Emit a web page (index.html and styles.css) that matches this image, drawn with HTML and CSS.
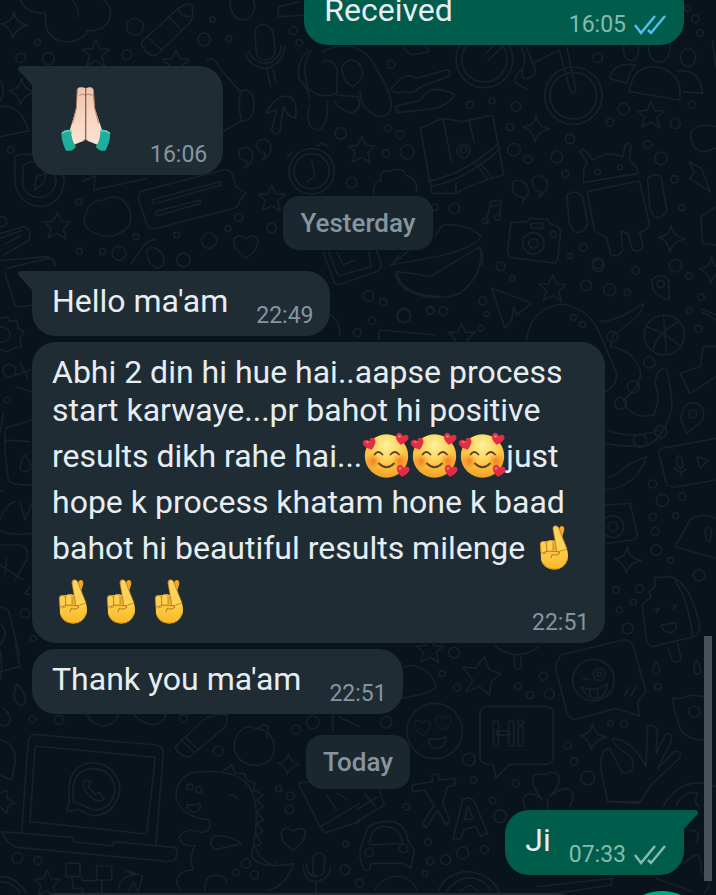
FILE: index.html
```html
<!DOCTYPE html>
<html lang="en">
<head>
<meta charset="utf-8">
<meta name="viewport" content="width=device-width, initial-scale=1">
<title>Chat</title>
<link rel="stylesheet" href="styles.css">
</head>
<body>
<svg class="wallpaper" viewBox="0 0 2148 2685" aria-hidden="true">
  <defs>
    <path id="star" d="M0-40 12-13 40-12 18 8 26 38 0 22-28 36-19 7-40-12-12-14Z"/>
    <path id="spark" d="M0-40Q4-5 42 2 5 8-4 40-8 8-38-4-4-6 0-40Z"/>
    <path id="heart" d="M0 36C-60 0-36-50 0-22 38-50 56 0 0 36Z"/>
    <path id="quote" d="M-6 30Q6 18 2 6C-28 10-28-32-4-32 30-32 28 18-6 30Z"/>
  </defs>
  <g>
    <path d="M60-5Q70 40 138 40M215-5Q245 40 232 52M138 40C130 90 150 130 215 125Q255 115 262 92C340 95 350 20 305-5"/>
    <path d="M425 125 535 25Q570 5 576 15 582 55 570 68L470 165Q445 172 425 135ZM440 108 485 150M505 50 545 90M535 25Q540 50 572 50"/>
    <path d="M765 95Q768 72 792 74 818 80 820 105L826 150Q822 180 795 180 770 178 768 150ZM737 158Q750 205 800 205 850 190 856 136M745 150Q760 190 800 190 840 180 845 136M800 205 812 260M820 205 828 250"/>
    <path d="M620 180Q640 165 660 205L720 275Q755 255 762 310 762 365 725 362L660 400M722 275Q712 320 725 362"/>
    <path d="M798 340Q830 280 870 290 895 310 886 355L865 345 850 320 840 395Q822 410 815 390L830 330Z"/>
    <path d="M925 150Q885 190 898 240 925 260 930 300M935 150Q900 190 925 265Q960 300 1010 280L1012 210Q1000 170 965 185M965 155Q1070 110 1120 190L1155 250Q1200 350 1138 350 1080 330 1080 270M930 310Q910 385 955 390 990 370 980 300M1000 300Q1030 345 1065 335 1085 320 1075 290L1005 285M1025 205Q1040 170 1070 185 1110 220 1060 260Q1030 250 1025 205"/>
    <path d="M45 470C60 455 180 460 193 540 185 640 80 640 50 570 40 530 45 490 45 470M70 500C90 470 170 490 168 550 150 610 85 600 68 560ZM105 570 108 530 140 520 130 550ZM0 410 90 392M0 320Q60 310 85 388M0 240Q20 270 0 305"/>
    <path d="M245 545 285 528 282 570 440 535M310 600Q345 580 372 604 405 640 385 680 340 725 285 700 240 680 258 640 270 600 310 600Z"/>
    <path d="M420 575 670 510Q690 508 695 520L708 560 738 580 720 598Q720 620 700 625L470 685Q445 690 440 670L415 595ZM455 600 660 545 665 555 460 612ZM465 635 600 600 602 610 470 648Z"/>
    <circle cx="935" cy="514" r="68"/><circle cx="935" cy="514" r="53"/><path d="M950 440 960 430 985 438M860 475 875 455M935 480 945 530 920 545"/>
    <path d="M0 700 70 680Q100 690 85 722L10 765M0 715 70 690M10 735 65 705M0 782 140 770Q165 775 165 800"/>
    <path d="M390 795 430 740Q440 720 470 718M440 750Q460 730 485 760 505 800 470 805 440 790 440 750Z"/>
    <path d="M690 0Q690 60 735 60 775 40 760 0M835 20 900 5M835 50 920 45M835 20V50"/>
    <use href="#spark" x="42" y="75"/><use href="#star" x="288" y="160"/><use href="#star" x="528" y="190"/><use href="#star" x="815" y="595"/><use href="#star" x="172" y="678"/><use href="#spark" x="65" y="275"/><use href="#star" x="1085" y="450"/>
    <use href="#quote" x="738" y="475"/><use href="#quote" x="792" y="450"/><use href="#heart" x="738" y="738"/>
    <circle cx="405" cy="80" r="25"/><circle cx="612" cy="118" r="19"/><circle cx="637" cy="58" r="8"/><circle cx="686" cy="116" r="9"/><circle cx="380" cy="164" r="15"/><circle cx="145" cy="175" r="18"/><circle cx="62" cy="173" r="14"/><circle cx="113" cy="127" r="9"/><circle cx="880" cy="92" r="12"/><circle cx="898" cy="128" r="10"/><circle cx="1022" cy="400" r="17"/><circle cx="1055" cy="548" r="16"/><circle cx="627" cy="722" r="23"/><circle cx="357" cy="760" r="21"/><circle cx="550" cy="780" r="20"/><circle cx="237" cy="606" r="9"/><circle cx="32" cy="450" r="10"/><circle cx="716" cy="652" r="12"/><circle cx="684" cy="686" r="9"/><circle cx="815" cy="684" r="14"/><circle cx="408" cy="710" r="9"/><circle cx="238" cy="754" r="9"/><circle cx="530" cy="705" r="9"/><circle cx="308" cy="755" r="9"/><circle cx="5" cy="665" r="15"/>
  </g>
  <g transform="translate(1068 0)">
    <path d="M105 265 135 235Q160 220 180 235L270 210Q285 210 280 228L195 260Q170 285 145 275 110 285 105 265ZM118 320 195 300Q210 265 240 268 290 275 295 285 275 315 240 325L125 338ZM140 140 165 165 220 155 205 135"/>
    <circle cx="385" cy="178" r="85"/><circle cx="385" cy="178" r="68"/><circle cx="652" cy="287" r="86"/><circle cx="652" cy="287" r="70"/>
    <path d="M385 165 425 125M395 182 440 140M495 140Q515 180 500 205 470 230 480 250L515 270M510 140 530 190 610 150 642 270Q650 290 660 270L632 140M530 190Q550 220 520 235 490 240 500 205"/>
    <path d="M820 275Q830 195 900 200 980 215 972 300ZM760 235Q775 185 840 195 820 215 812 250ZM965 215Q1030 200 1040 280L980 275"/><ellipse cx="910" cy="145" rx="32" ry="42"/><ellipse cx="825" cy="150" rx="23" ry="32"/><ellipse cx="996" cy="172" rx="23" ry="28"/>
    <path d="M193 385 260 355 320 365 410 345 443 525Q360 545 300 580L228 580ZM215 545Q330 520 428 430M222 560Q330 540 435 445M370 485 410 535M360 490 395 540M260 355 288 490M340 360 355 430M300 545V580M302 450Q325 415 343 450 335 475 325 475 305 470 302 450Z"/><circle cx="322" cy="450" r="9"/>
    <path d="M55 585Q45 550 75 540 65 510 105 512 140 500 150 525 190 540 180 580M470 545C490 535 525 550 515 585L500 608Q505 590 495 590 465 590 470 545ZM530 535C555 515 585 540 570 570L550 592 555 575Q525 575 530 535Z"/>
    <path d="M683 548Q680 495 695 490L670 455Q680 440 695 460L710 480Q760 450 800 470L808 435Q825 425 825 440L820 480Q850 505 845 520ZM693 575 850 543 880 670Q870 700 850 695L862 740Q850 760 830 750L815 700 795 695 800 750Q790 775 765 765L750 710Q720 700 715 690ZM632 585Q655 565 680 590L695 670Q685 705 655 695L640 670ZM875 535Q895 515 915 530L932 630Q920 660 895 650L882 630Z"/><circle cx="725" cy="516" r="8"/><circle cx="792" cy="502" r="8"/>
    <path d="M390 668 405 605 435 600 432 648M400 620 430 615"/><circle cx="388" cy="662" r="9"/><circle cx="425" cy="652" r="9"/>
    <path d="M465 668 515 665 520 655 575 658 580 670 605 680Q615 685 613 700L605 780Q600 792 585 788L460 772 455 750ZM525 670H560V685H525Z"/><circle cx="532" cy="730" r="32"/><circle cx="532" cy="730" r="14"/><circle cx="592" cy="703" r="9"/>
    <path d="M235 710 260 675Q340 670 375 710 350 745 250 768L105 795 130 765M360 745Q385 740 378 800M1000 485 1035 505 1050 540 1062 575 1000 535 1015 520ZM1035 650 1080 620M1035 650 1040 730 1080 735M1080 380Q1030 365 1005 395 1000 450 1045 455L1080 445M1068 120 1080 200"/>
    <use href="#star" x="885" y="345" /><use href="#spark" x="540" y="385"/><use href="#spark" x="945" y="715"/>
    <circle cx="725" cy="173" r="14"/><circle cx="105" cy="193" r="12"/><circle cx="480" cy="320" r="14"/><circle cx="408" cy="303" r="9"/><circle cx="341" cy="314" r="10"/><circle cx="803" cy="327" r="17"/><circle cx="762" cy="367" r="12"/><circle cx="958" cy="370" r="15"/><circle cx="1007" cy="314" r="11"/><circle cx="462" cy="381" r="11"/><circle cx="642" cy="417" r="14"/><circle cx="474" cy="449" r="19"/><circle cx="516" cy="478" r="12"/><circle cx="602" cy="471" r="18"/><circle cx="628" cy="522" r="11"/><circle cx="153" cy="456" r="21"/><circle cx="90" cy="460" r="11"/><circle cx="132" cy="404" r="12"/><circle cx="95" cy="385" r="10"/><circle cx="915" cy="475" r="19"/><circle cx="875" cy="434" r="12"/><circle cx="956" cy="538" r="11"/><circle cx="295" cy="625" r="16"/><circle cx="237" cy="622" r="10"/><circle cx="682" cy="742" r="12"/><circle cx="643" cy="768" r="8"/><circle cx="977" cy="623" r="9"/><circle cx="725" cy="790" r="16"/><circle cx="1018" cy="57" r="11"/><circle cx="1032" cy="99" r="10"/><circle cx="995" cy="25" r="9"/>
  </g>
  <g transform="translate(0 720)">
    <path d="M20 85 145 55Q165 55 165 80M15 100 45 195Q50 205 95 195M0 235 20 230 30 245 50 240 55 265 72 275 60 295 65 320 40 325 25 335 0 330M0 260Q35 265 30 290 20 310 0 305M30 410 95 390M45 440 95 455M60 365 85 420M0 580 10 520M15 565 95 540M15 600 90 605M15 570V640L25 720Q30 735 95 735M75 645Q110 690 75 695 45 690 75 645M0 750 10 755M0 840Q20 785 50 785M60 785 75 840 95 790M0 870Q30 890 95 880M0 915H60Q90 920 80 960L45 1020M0 975 70 1020M20 950 15 1010M90 1040 75 1060 90 1065M0 1100 25 1110 60 1250M0 1150Q30 1180 0 1215M970 35 1000 120Q1005 140 1030 130L1130 95Q1150 85 1140 60L1130 30M985 35 1015 108 1115 80 1105 35M1010 35 1030 75 1065 60M1190 95Q1200 165 1320 170M1180 70 1240 20M990 225Q1020 240 1020 290M1135 300 1140 270 1310 285"/>
    <circle cx="28" cy="392" r="19"/><circle cx="22" cy="480" r="9"/><circle cx="75" cy="1120" r="14"/><circle cx="100" cy="1195" r="9"/><circle cx="1105" cy="168" r="16"/><circle cx="1150" cy="186" r="11"/><circle cx="1212" cy="228" r="20"/><circle cx="1116" cy="242" r="11"/><circle cx="1072" cy="278" r="12"/><circle cx="1290" cy="212" r="10"/>
  </g>
  <g transform="translate(1140 720)">
    <path d="M50 95Q100 100 150 110L300 20Q315 100 240 160 160 190 80 150 40 120 50 95ZM335 145 455 190 410 225 402 200 395 240 375 265ZM440 300Q450 205 545 192 610 200 650 260L710 400Q710 440 675 455M660 245Q720 240 790 190 795 220 700 285L690 320Q760 330 780 390 790 430 730 480 750 540 820 525 845 480 825 430 830 380 860 385 880 480 875 510 840 620 780 618 720 620 675 610M680 570Q760 600 840 570M675 750Q770 740 800 650 740 670 715 700L680 715"/>
    <path d="M815 120Q845 95 865 120L868 175Q850 185 820 150ZM903 540Q905 490 940 488 985 500 965 545L920 580ZM1008 595 845 625Q835 630 838 645L860 735 880 742 1008 720M890 655Q895 640 905 655L910 680Q900 690 892 680ZM880 680Q900 710 920 685M902 700 905 715M950 650 985 660 960 685ZM900 400 960 380 970 320 1008 320M900 400 930 460 1008 410M960 205 1008 225M965 215 1008 240"/>
    <circle cx="853" cy="285" r="60"/><path d="M800 260Q860 280 905 320M850 225 860 345M820 330Q830 280 895 245"/><circle cx="842" cy="132" r="11"/><circle cx="938" cy="522" r="12"/>
    <path d="M675 795 750 790 772 885Q770 900 755 900L675 912M885 920 930 840Q970 815 1008 835M885 920 1008 955M975 870Q985 855 995 870L990 905 978 900Z"/><circle cx="698" cy="860" r="33"/><circle cx="698" cy="860" r="14"/>
    <use href="#star" x="518" y="145"/><use href="#spark" x="742" y="960"/><use href="#spark" x="995" y="90"/><use href="#star" x="245" y="290"/>
    <circle cx="697" cy="290" r="16"/><circle cx="760" cy="440" r="18"/><circle cx="722" cy="490" r="18"/><circle cx="842" cy="575" r="18"/><circle cx="780" cy="602" r="20"/><circle cx="580" cy="232" r="9"/><circle cx="607" cy="253" r="9"/><circle cx="362" cy="79" r="13"/><circle cx="397" cy="114" r="8"/><circle cx="308" cy="183" r="12"/><circle cx="320" cy="222" r="8"/><circle cx="190" cy="213" r="13"/><circle cx="151" cy="211" r="12"/><circle cx="71" cy="226" r="21"/><circle cx="302" cy="265" r="9"/><circle cx="618" cy="136" r="16"/><circle cx="689" cy="149" r="18"/><circle cx="655" cy="76" r="18"/><circle cx="767" cy="92" r="11"/><circle cx="886" cy="77" r="19"/><circle cx="742" cy="158" r="10"/><circle cx="927" cy="108" r="10"/><circle cx="927" cy="213" r="9"/><circle cx="956" cy="267" r="11"/><circle cx="963" cy="171" r="10"/><circle cx="808" cy="367" r="17"/><circle cx="847" cy="781" r="18"/><circle cx="906" cy="770" r="12"/><circle cx="818" cy="732" r="12"/><circle cx="818" cy="831" r="11"/><circle cx="887" cy="827" r="9"/><circle cx="825" cy="874" r="12"/><circle cx="829" cy="930" r="16"/><circle cx="872" cy="961" r="9"/><circle cx="957" cy="1006" r="17"/>
  </g>
  <g transform="translate(1788 1440)">
    <path d="M175 293 220 290Q280 300 310 430 315 460 295 470L170 500Q155 500 150 470L138 375 165 350 160 335 178 320ZM235 295Q280 370 290 470M215 500 228 540Q245 555 255 535L245 490M170 390 190 385 180 400M225 375 240 378 230 388M195 435 240 428Q245 455 220 458 200 455 195 435M182 545Q200 580 180 583 160 575 182 545M302 540Q325 580 302 583 285 570 302 540"/>
    <circle cx="60" cy="329" r="10"/><circle cx="130" cy="326" r="12"/><circle cx="112" cy="366" r="9"/><circle cx="70" cy="390" r="9"/><circle cx="95" cy="446" r="16"/><circle cx="185" cy="620" r="10"/>
  </g>
  <g transform="translate(1068 1890)">
    <path d="M600 100 615 75 800 30Q825 28 832 50L870 185 845 215 850 258 780 235 660 268Q640 268 632 245L600 120ZM805 200 820 170M825 200 840 165"/><circle cx="712" cy="150" r="62"/><circle cx="730" cy="133" r="18"/><circle cx="730" cy="133" r="7"/><path d="M680 145 705 148M675 170Q720 190 755 160 750 205 715 205 690 200 675 170M700 180 705 200M725 178V203"/>
    <circle cx="236" cy="303" r="83"/><use href="#heart" transform="translate(200 292) scale(.65)"/><use href="#heart" transform="translate(262 278) scale(.65)"/><path d="M215 328Q245 330 270 320 268 355 240 355 220 350 215 328M390 230H575Q590 232 592 250V385Q588 402 570 403H460L420 445 412 405 385 400Q372 395 372 380V250Q375 232 390 230Z"/>
    <path d="M135 115 170 105Q230 120 240 170 230 190 135 205M415 45Q480 100 550 50M475 80V110Q485 125 495 110V80M320 110 360 115 385 80 400 120 435 130 405 155 400 195 370 170 330 185 350 150Z"/>
    <path d="M168 465 230 455 228 435 245 432 250 450 300 445 295 465 275 470 260 520 282 570 270 585 245 540 210 595 200 580 235 525 205 480 170 485ZM290 630 320 510Q340 495 355 515L395 610 375 620 360 590 325 598 315 625ZM325 570 335 530 352 565Z"/>
    <path d="M560 510C510 450 530 420 565 435 610 410 630 450 580 500 650 445 665 500 640 530M560 510C510 470 490 500 510 540M575 505V540"/>
    <path d="M755 515 735 420Q730 360 760 355L800 430Q845 430 825 380 770 345 770 325 830 330 870 410L875 290Q890 280 905 300L900 370 930 310Q950 310 945 335L905 415 955 365Q980 360 970 385L890 460 850 520ZM755 515H850M920 530Q980 430 1080 470M960 530Q980 480 1025 490 1010 520 1030 530"/>
    <path d="M950 205 975 205 1010 195 1045 200M950 205 955 245 965 265Q970 330 1045 330"/><circle cx="1015" cy="245" r="17"/>
    <path d="M25 720Q5 680 15 650L35 595Q60 570 110 575 150 585 155 630L175 660 165 715 140 700 45 700 40 720ZM40 645Q40 600 75 590 130 585 140 640ZM0 575 85 525 70 480M0 540 65 500M25 490 60 530"/><circle cx="40" cy="667" r="13"/><circle cx="143" cy="655" r="13"/>
    <path d="M245 785Q270 725 340 725 410 735 430 790M270 785Q300 745 340 743 385 745 405 785M55 780Q80 740 130 738 170 745 185 785M340 765 310 785M340 765 370 785M1000 600Q1040 600 1020 640M985 700Q1040 640 1035 730 1080 750 1045 790M900 745 1010 785M540 770 770 745 765 765 600 790"/>
    <use href="#star" x="222" y="60"/><use href="#spark" x="710" y="320"/>
    <circle cx="294" cy="68" r="16"/><circle cx="258" cy="131" r="9"/><circle cx="303" cy="173" r="11"/><circle cx="580" cy="192" r="15"/><circle cx="522" cy="195" r="11"/><circle cx="486" cy="169" r="10"/><circle cx="562" cy="139" r="12"/><circle cx="90" cy="277" r="17"/><circle cx="339" cy="388" r="19"/><circle cx="353" cy="450" r="10"/><circle cx="479" cy="460" r="11"/><circle cx="410" cy="512" r="10"/><circle cx="433" cy="559" r="19"/><circle cx="695" cy="444" r="21"/><circle cx="654" cy="394" r="11"/><circle cx="635" cy="347" r="11"/><circle cx="805" cy="281" r="11"/><circle cx="763" cy="279" r="8"/><circle cx="320" cy="669" r="18"/><circle cx="269" cy="689" r="15"/><circle cx="223" cy="693" r="11"/><circle cx="216" cy="636" r="10"/><circle cx="385" cy="659" r="12"/><circle cx="207" cy="730" r="8"/><circle cx="151" cy="530" r="10"/><circle cx="10" cy="760" r="12"/><circle cx="906" cy="170" r="9"/>
    <text class="doodle-text" x="405" y="348">Hi</text>
  </g>
  <g transform="translate(0 1920)">
    <path d="M65 573 85 300Q90 283 110 284L470 315Q490 320 490 340L468 615M90 545 105 318 466 352 440 582ZM5 575 215 592 220 605 340 618V605L525 623Q538 630 525 660 510 668 480 662L50 622Q20 610 5 575ZM200 515 208 485Q195 370 280 368 355 375 360 450 345 525 280 527 250 520 238 508ZM222 485Q205 390 280 385 340 390 345 450 335 510 280 510L235 490ZM255 420Q240 440 270 470 295 490 312 478L300 458 285 463 265 440 272 425Z"/>
    <path d="M628 540Q540 530 528 470 530 395 610 395 700 390 740 430 775 470 768 560L755 650Q780 690 880 670 860 740 800 752M628 540Q640 575 600 577 560 560 538 590 540 620 585 617 565 660 580 690 530 690 530 730L545 752M725 610Q680 580 640 590 620 620 650 628 690 620 725 610M615 752Q610 705 650 705 680 710 680 730M560 492Q580 500 600 490 605 515 580 517 560 510 560 492M685 470Q700 455 712 480M665 395 695 375 705 400 735 400 740 420 765 430 760 450 790 465 770 480 790 500 770 515 790 540 770 550 788 575 768 585 785 610 765 620 780 650 800 665 820 680 830 665"/><circle cx="570" cy="441" r="9"/><circle cx="597" cy="450" r="9"/>
    <path d="M525 320 610 240Q650 215 680 225 685 250 670 265L570 350Q540 355 525 320ZM545 300 585 340M555 290 595 330M765 265C830 270 830 330 810 360 770 390 720 375 705 335 695 280 735 250 765 265ZM770 270Q785 250 805 258L800 295M895 430 920 425M895 430 960 560 975 578 1080 545M960 560 1080 490M980 465 1010 510M1010 460 1045 480M940 650Q955 625 975 650L970 700Q955 715 938 700ZM910 675Q910 725 950 725 990 715 992 680M920 670Q920 710 950 712M948 725V760M998 220V275M1015 230 1080 260"/>
    <path d="M260 215Q265 250 310 258 355 250 355 215M400 220Q420 250 460 255 500 245 495 220M0 120Q10 80 0 30M0 95 60 80 45 10M50 130Q95 180 65 197 30 190 50 130M10 205Q50 240 15 258 0 255 0 250M0 300Q50 310 45 370L35 420 0 405M0 460 20 450 22 475 45 490 25 495 20 520 0 500M0 710Q50 710 80 760M0 725Q40 725 60 760M198 670H240V710H198ZM290 678H335V720H290ZM240 710 250 722H290M305 720V760M215 710 220 745H248V760M355 750Q360 705 405 705L375 690 428 708 415 755 400 725 385 755"/>
    <use href="#spark" transform="translate(865 372) scale(.8)"/><use href="#heart" x="880" y="595"/><use href="#star" x="142" y="730"/>
    <circle cx="938" cy="247" r="19"/><circle cx="888" cy="269" r="14"/><circle cx="655" cy="333" r="15"/><circle cx="177" cy="240" r="14"/><circle cx="97" cy="238" r="10"/><circle cx="550" cy="235" r="12"/><circle cx="52" cy="654" r="16"/><circle cx="113" cy="662" r="12"/><circle cx="738" cy="670" r="14"/><circle cx="707" cy="698" r="10"/><circle cx="763" cy="705" r="12"/><circle cx="871" cy="468" r="12"/><circle cx="868" cy="508" r="13"/><circle cx="836" cy="446" r="9"/><circle cx="1035" cy="689" r="15"/><circle cx="1037" cy="612" r="9"/>
  </g>
</svg>

<svg class="defs" aria-hidden="true">
  <defs>
    <radialGradient id="face" cx=".5" cy=".25" r=".8"><stop offset="0" stop-color="#fff0a0"/><stop offset=".45" stop-color="#fdd152"/><stop offset="1" stop-color="#f09a20"/></radialGradient>
    <radialGradient id="blush"><stop offset="0" stop-color="#f5711f" stop-opacity=".85"/><stop offset="1" stop-color="#f5801f" stop-opacity="0"/></radialGradient>
    <linearGradient id="hand" x1="0" y1="0" x2="0" y2="1"><stop offset="0" stop-color="#ffd75c"/><stop offset="1" stop-color="#f9ba28"/></linearGradient>
    <linearGradient id="skin" x1="0" y1="0" x2="0" y2="1"><stop offset="0" stop-color="#eec5ae"/><stop offset="1" stop-color="#fce3d2"/></linearGradient>
    <path id="love" d="M0 6C-5 3-8-1-6-4-4-7-1-5 0-3 2-6 5-6 6-3 7 0 3 4 0 6Z"/>
    <symbol id="adore" viewBox="0 0 48 54">
      <circle cx="24.5" cy="27" r="21.7" fill="url(#face)"/>
      <circle cx="11" cy="32" r="8" fill="url(#blush)"/><circle cx="38" cy="32" r="8" fill="url(#blush)"/>
      <path d="M12.500 25.500Q16 20.500 20.500 25.500M28.500 25.500Q33 20.500 37 25.500M17 34.500Q24.500 42 32 34.500" fill="none" stroke="#60401c" stroke-width="1.800" stroke-linecap="round"/>
      <g fill="#e12d45"><use href="#love" transform="translate(8 15) rotate(-18)"/><use href="#love" transform="translate(40 10) rotate(14)"/><use href="#love" transform="translate(41 42) rotate(12)"/></g>
      <g fill="#f8788a"><circle cx="5.500" cy="13" r="1.300"/><circle cx="37.500" cy="7.500" r="1.300"/><circle cx="38" cy="39.500" r="1.300"/></g>
    </symbol>
    <symbol id="crossed" viewBox="0 0 48 54">
      <path d="M7.500 25Q6.500 21 10 20.500L15 20 19 19 33 26Q36 32 34.500 39 31 48.500 21 48.500 10.500 48 8 39Z" fill="url(#hand)"/>
      <path d="M26 9Q26.500 4.500 29.500 5 32 6 31 10L25 29 17.500 29Z" fill="#eda927"/>
      <path d="M20 8Q19.500 5 22.500 4.800 25.500 4.600 26.500 9L34 28 24 31Z" fill="#ffd35a" stroke="#b97b1b" stroke-width=".8"/>
      <path d="M7.500 25Q6.500 20.500 10.500 20.500 14 20.500 13.500 24V32Q10 34 8 31ZM13.500 24Q13.500 19.500 17 19.500 20.500 19.500 20 24V30Q17 34 14 31Z" fill="#ffd150" stroke="#c9871d" stroke-width=".9"/>
      <path d="M10 31.500Q16 29 24 30.500L27 32Q25 35 19 33.500M19 33.500 18 37" fill="#fbc63f" stroke="#b97718" stroke-width="1"/>
      <path d="M10 42Q15 48.500 22 48 31 47.500 34 39" fill="none" stroke="#e2941a" stroke-width="1"/>
    </symbol>
    <symbol id="pray" viewBox="60 45 156 204">
      <path d="M112 58Q116 50 122 52 134 50 137 56 142 50 152 52 159 52 160 60L163 110 190 192 172 224 146 214 137 206 128 214 102 224 86 192 110 110Z" fill="url(#skin)"/>
      <path d="M112 56 109 115 98 160M160 58 164 115 176 160M118 76Q128 68 136 76 146 68 158 76M128 214 137 208 146 214" fill="none" stroke="#b98068" stroke-width="3"/>
      <path d="M137 56V206" stroke="#93614f" stroke-width="4"/>
      <path d="M64 190Q75 177 94 182 93 210 108 230 97 245 78 242 65 218 64 190ZM211 190Q200 177 181 182 182 210 167 230 178 245 196 242 210 218 211 190Z" fill="#1fae9b"/>
      <path d="M66 190Q77 179 94 183M209 190Q198 179 181 183" fill="none" stroke="#5cd3c2" stroke-width="5"/>
    </symbol>
    <symbol id="ticks" viewBox="0 0 32 22"><path d="M1 11 7 19 21 2M14 16 17 19 31 2" fill="none" stroke="currentColor" stroke-width="2.500"/></symbol>
  </defs>
</svg>

<main class="chat">
  <article class="bubble out first">
    <p class="text">Received</p>
    <div class="meta"><time>16:05</time><svg class="ticks read" role="img" aria-label="Read"><use href="#ticks"/></svg></div>
  </article>
  <article class="bubble in tail">
    <p class="text"><svg class="pray" role="img" aria-label="Folded hands"><use href="#pray"/></svg></p>
    <div class="meta"><time>16:06</time></div>
  </article>
  <h2 class="day">Yesterday</h2>
  <article class="bubble in tail">
    <p class="text">Hello ma'am</p>
    <div class="meta"><time>22:49</time></div>
  </article>
  <article class="bubble in long">
    <p class="text">Abhi 2 din hi hue hai..aapse process<br>start karwaye...pr bahot hi positive<br>results dikh rahe hai...<svg class="emoji" role="img" aria-label="Smiling face with hearts"><use href="#adore"/></svg><svg class="emoji" role="img" aria-label="Smiling face with hearts"><use href="#adore"/></svg><svg class="emoji" role="img" aria-label="Smiling face with hearts"><use href="#adore"/></svg>just<br>hope k process khatam hone k baad<br>bahot hi beautiful results milenge <svg class="emoji" role="img" aria-label="Crossed fingers"><use href="#crossed"/></svg><br><svg class="emoji" role="img" aria-label="Crossed fingers"><use href="#crossed"/></svg><svg class="emoji" role="img" aria-label="Crossed fingers"><use href="#crossed"/></svg><svg class="emoji" role="img" aria-label="Crossed fingers"><use href="#crossed"/></svg></p>
    <div class="meta"><time>22:51</time></div>
  </article>
  <article class="bubble in">
    <p class="text">Thank you ma'am</p>
    <div class="meta"><time>22:51</time></div>
  </article>
  <h2 class="day">Today</h2>
  <article class="bubble out tail">
    <p class="text">Ji</p>
    <div class="meta"><time>07:33</time><svg class="ticks" role="img" aria-label="Delivered"><use href="#ticks"/></svg></div>
  </article>
</main>
<footer class="composer">
  <div class="field"></div>
  <div class="send"></div>
</footer>
<div class="scrollbar"></div>
</body>
</html>
```
FILE: styles.css
```css
* {
  box-sizing: border-box;
}

body {
  position: relative;
  display: flex;
  flex-direction: column;
  height: 100vh;
  margin: 0;
  overflow: hidden;
  background: #08131a;
  color: #e6eef3;
  font-family: Roboto, "Liberation Sans", sans-serif;
}

.wallpaper {
  position: absolute;
  top: 0;
  left: 0;
  z-index: -1;
  width: 100%;
  fill: none;
  stroke: #162128;
  stroke-width: 5;
  stroke-linejoin: round;
}

.doodle-text {
  font-size: 106px;
  font-weight: 700;
}

.defs {
  position: absolute;
  width: 0;
  height: 0;
}

.chat {
  display: flex;
  flex: none;
  flex-direction: column;
  align-items: flex-start;
  gap: 6px;
  margin-top: -20px;
  padding: 0 32px;
}

.bubble {
  position: relative;
  display: flex;
  align-items: flex-end;
  gap: 28px;
  padding: 11px 16px 6px 20px;
  border-radius: 24px;
}

.in {
  background: #202c33;
}

.out {
  align-self: flex-end;
  gap: 18px;
  padding-right: 18px;
  background: #005c4b;
}

.first {
  gap: 116px;
  margin-bottom: 15px;
}

.tail.in {
  border-top-left-radius: 0;
}

.tail.out {
  border-top-right-radius: 0;
}

.tail::before {
  content: "";
  position: absolute;
  top: 0;
  width: 14px;
  height: 19px;
  background: inherit;
}

.tail.in::before {
  right: 100%;
  border-top-left-radius: 3px;
  clip-path: polygon(0 0, 100% 0, 100% 100%, 0 20%);
}

.tail.out::before {
  left: 100%;
  border-top-right-radius: 3px;
  clip-path: polygon(0 0, 100% 0, 100% 20%, 0 100%);
}

.text {
  margin: 0 0 10px;
  font-size: 32px;
  line-height: 38px;
}

.long {
  display: grid;
}

.long > * {
  grid-area: 1 / 1;
}

.long .text {
  margin: 0 8px 8px 0;
}

.long .meta {
  align-self: end;
  justify-self: end;
}

.emoji {
  width: 48px;
  height: 54px;
  vertical-align: -16px;
}

.pray {
  display: block;
  width: 52px;
  height: 68px;
  margin: 8px 10px 6px 8px;
}

.meta {
  display: flex;
  align-items: center;
  gap: 8px;
  color: #8495a0;
  font-size: 23px;
  line-height: 28px;
}

.out .meta {
  color: #83bcae;
}

.ticks {
  width: 32px;
  height: 22px;
}

.ticks.read {
  color: #53bdeb;
}

.day {
  align-self: center;
  margin: 15px 0;
  padding: 11px 17px;
  border-radius: 16px;
  background: #1b272e;
  color: #8696a0;
  font-size: 26px;
  font-weight: 500;
  line-height: 32px;
}

.composer {
  display: flex;
  flex: 1 1 0;
  align-items: flex-start;
  gap: 12px;
  min-height: 0;
  margin-top: 16px;
  padding: 0 6px 0 12px;
  overflow: hidden;
}

.field {
  flex: 1;
  height: 96px;
  margin-top: 2px;
  border-radius: 48px;
  background: #1f2c3a;
}

.send {
  width: 96px;
  height: 96px;
  border-radius: 50%;
  background: #00a884;
}

.scrollbar {
  position: absolute;
  top: 636px;
  right: 4px;
  width: 8px;
  height: 245px;
  background: #465258;
}
```
